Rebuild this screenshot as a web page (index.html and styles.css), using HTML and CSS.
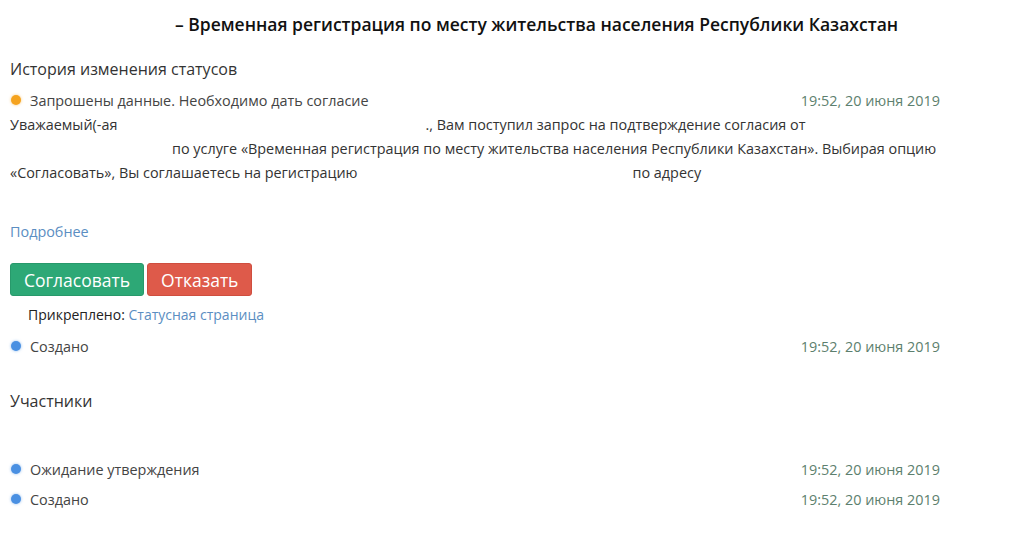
FILE: index.html
```html
<!DOCTYPE html>
<html>
<head>
  <meta charset="utf-8">
  <title>Временная регистрация</title>
  <link rel="stylesheet" href="styles.css">
</head>
<body>
  <div class="page">
    <h1 class="title">– Временная регистрация по месту жительства населения Республики Казахстан</h1>

    <h2 class="section">История изменения статусов</h2>

    <div class="status">
      <span class="dot dot-orange"></span>
      <span class="status-name">Запрошены данные. Необходимо дать согласие</span>
      <span class="date">19:52, 20 июня 2019</span>
    </div>

    <p class="message">
      Уважаемый(-ая<span class="blank blank-name"></span>., Вам поступил запрос на подтверждение согласия от<br>
      <span class="blank blank-org"></span>по услуге «Временная регистрация по месту жительства населения Республики Казахстан». Выбирая опцию<br>
      «Согласовать», Вы соглашаетесь на регистрацию<span class="blank blank-person"></span>по адресу
    </p>

    <a class="more" href="#">Подробнее</a>

    <div class="actions">
      <button class="btn btn-ok">Согласовать</button>
      <button class="btn btn-no">Отказать</button>
    </div>

    <div class="attached">Прикреплено: <a href="#">Статусная страница</a></div>

    <div class="status">
      <span class="dot dot-blue"></span>
      <span class="status-name">Создано</span>
      <span class="date">19:52, 20 июня 2019</span>
    </div>

    <h2 class="section section-members">Участники</h2>

    <div class="members">
      <div class="status">
        <span class="dot dot-blue"></span>
        <span class="status-name">Ожидание утверждения</span>
        <span class="date">19:52, 20 июня 2019</span>
      </div>
      <div class="status">
        <span class="dot dot-blue"></span>
        <span class="status-name">Создано</span>
        <span class="date">19:52, 20 июня 2019</span>
      </div>
    </div>
  </div>
</body>
</html>
```

FILE: styles.css
```css
body {
  margin: 0;
  padding: 0;
  background: #fff;
  font-family: "Open Sans", "Liberation Sans", sans-serif;
  color: #333;
}

.page {
  width: 930px;
  padding: 12px 0 0 10px;
}

.title {
  margin: 0 0 0 165px;
  font-size: 17.5px;
  font-weight: 600;
  color: #111;
  line-height: 24px;
}

.section {
  margin: 22px 0 0 0;
  font-size: 16px;
  font-weight: normal;
  line-height: 22px;
  color: #333;
}

.section-members {
  margin-top: 29px;
}

.status {
  display: flex;
  align-items: center;
  height: 30px;
  font-size: 14.4px;
}

.section + .status {
  margin-top: 5px;
}

.dot {
  width: 10px;
  height: 10px;
  border-radius: 50%;
  margin: 0 9px 0 1px;
}

.dot-orange {
  background: #f5a31f;
  box-shadow: 0 0 3px rgba(245, 163, 31, 0.6);
}

.dot-blue {
  background: #4a90e2;
  box-shadow: 0 0 3px rgba(74, 144, 226, 0.6);
}

.status-name {
  flex: 1;
  color: #444;
}

.date {
  color: #5d7f6e;
}

.message {
  margin: -2px 0 0 0;
  font-size: 14.4px;
  line-height: 24px;
  color: #333;
}

.blank {
  display: inline-block;
}

.blank-name {
  width: 308px;
}

.blank-org {
  width: 162px;
}

.blank-person {
  width: 275px;
}

.more {
  display: block;
  margin-top: 37px;
  font-size: 14.4px;
  line-height: 20px;
  color: #5b8ec2;
  text-decoration: none;
}

.actions {
  display: flex;
  gap: 3px;
  margin-top: 21px;
}

.btn {
  height: 33px;
  padding: 0 13px;
  font-family: inherit;
  font-size: 17.5px;
  color: #fff;
  border-radius: 3px;
  cursor: pointer;
}

.btn-ok {
  background: #2da876;
  border: 1px solid #28996b;
}

.btn-no {
  background: #de5a4a;
  border: 1px solid #cf4e3f;
}

.attached {
  margin: 10px 0 0 18px;
  font-size: 14px;
  line-height: 18px;
  color: #222;
}

.attached a {
  color: #5b8ec2;
  text-decoration: none;
}

.attached + .status {
  margin-top: 7px;
}

.members {
  margin-top: 42px;
}
```
